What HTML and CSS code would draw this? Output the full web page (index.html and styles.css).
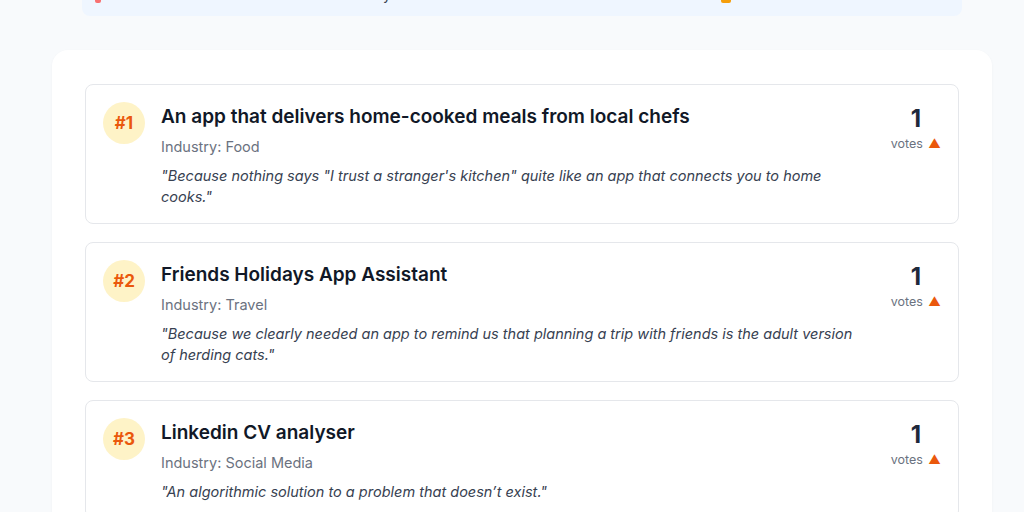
FILE: index.html
```html
<!DOCTYPE html>
<html lang="en">
<head>
    <meta charset="UTF-8">
    <meta name="viewport" content="width=device-width, initial-scale=1.0">
    <title>Idea Leaderboard</title>
    <link rel="stylesheet" href="styles.css">
</head>
<body>
    <div class="page">
        <div class="banner">
            <span class="banner-item first"><span class="dot dot-red"></span>Most voted ideas</span>
            <span class="banner-item second">Ranked daily</span>
            <span class="banner-item third"><span class="dot dot-orange"></span>Fresh ideas added</span>
        </div>

        <div class="board">
            <div class="idea">
                <div class="rank">#1</div>
                <div class="idea-body">
                    <h3 class="idea-title">An app that delivers home-cooked meals from local chefs</h3>
                    <div class="industry">Industry: Food</div>
                    <p class="quote">"Because nothing says "I trust a stranger's kitchen" quite like an app that connects you to home cooks."</p>
                </div>
                <div class="votes">
                    <div class="vote-count">1</div>
                    <div class="vote-label">votes <span class="arrow">▲</span></div>
                </div>
            </div>

            <div class="idea">
                <div class="rank">#2</div>
                <div class="idea-body">
                    <h3 class="idea-title">Friends Holidays App Assistant</h3>
                    <div class="industry">Industry: Travel</div>
                    <p class="quote">"Because we clearly needed an app to remind us that planning a trip with friends is the adult version of herding cats."</p>
                </div>
                <div class="votes">
                    <div class="vote-count">1</div>
                    <div class="vote-label">votes <span class="arrow">▲</span></div>
                </div>
            </div>

            <div class="idea">
                <div class="rank">#3</div>
                <div class="idea-body">
                    <h3 class="idea-title">Linkedin CV analyser</h3>
                    <div class="industry">Industry: Social Media</div>
                    <p class="quote">"An algorithmic solution to a problem that doesn’t exist."</p>
                </div>
                <div class="votes">
                    <div class="vote-count">1</div>
                    <div class="vote-label">votes <span class="arrow">▲</span></div>
                </div>
            </div>
        </div>
    </div>
</body>
</html>
```

FILE: styles.css
```css
/* Leaderboard page */
body {
    margin: 0;
    font-family: Inter, "Noto Sans", sans-serif;
    background-color: #f8fafc;
    color: #1f2937;
}
.page {
    width: 940px;
    margin-left: 52px;
}
.banner {
    box-sizing: border-box;
    margin: -26px 30px 0;
    height: 42px;
    padding: 0 13px 2px;
    display: flex;
    align-items: center;
    background-color: #eff6ff;
    border-radius: 8px;
    font-size: 14px;
    color: #374151;
}
.banner-item {
    display: flex;
    align-items: center;
    gap: 8px;
}
.banner-item.second { margin-left: 84px; }
.banner-item.third { margin-left: 330px; }
.dot {
    display: inline-block;
    width: 6px;
    height: 8px;
    margin-top: 10px;
    border-radius: 2px;
}
.dot-red { background-color: #f87171; }
.dot-orange {
    width: 10px;
    background-color: #f59e0b;
}

.board {
    margin-top: 34px;
    padding: 34px 33px 20px;
    background-color: #fff;
    border-radius: 16px;
    box-shadow: 0 1px 3px rgba(15, 23, 42, 0.04);
    display: flex;
    flex-direction: column;
    gap: 18px;
}
.idea {
    display: flex;
    align-items: flex-start;
    gap: 16px;
    padding: 17px 17px 16px 17px;
    border: 1px solid #e5e7eb;
    border-radius: 8px;
}
.rank {
    flex: none;
    width: 42px;
    height: 42px;
    border-radius: 50%;
    background-color: #fef3c7;
    color: #ea580c;
    font-size: 17px;
    font-weight: 700;
    display: flex;
    align-items: center;
    justify-content: center;
}
.idea-body {
    flex: 1;
    min-width: 0;
    padding-top: 1px;
}
.idea-title {
    margin: 0;
    font-size: 19px;
    line-height: 28px;
    font-weight: 600;
    color: #111827;
}
.industry {
    margin-top: 6px;
    font-size: 14.5px;
    line-height: 20px;
    color: #6b7280;
}
.quote {
    margin: 8px 0 0;
    font-size: 14.5px;
    line-height: 21px;
    font-style: italic;
    color: #374151;
}
.votes {
    flex: none;
    margin-left: 10px;
    padding-top: 1px;
    display: flex;
    flex-direction: column;
    align-items: center;
}
.vote-count {
    font-size: 24px;
    line-height: 32px;
    font-weight: 700;
    color: #1e293b;
}
.vote-label {
    margin-top: 1px;
    font-size: 12.5px;
    line-height: 16px;
    color: #6b7280;
}
.arrow {
    color: #ea580c;
    margin-left: 2px;
}
```
